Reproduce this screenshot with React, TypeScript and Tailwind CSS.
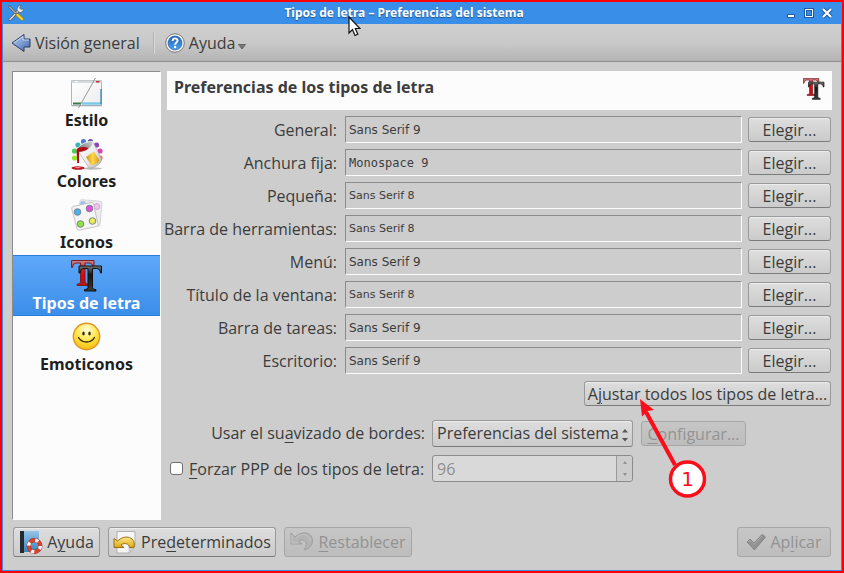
import type { ReactNode } from "react";

const buttonBase =
  "flex items-center justify-center whitespace-nowrap rounded-[3px] border leading-[22px]";
const buttonOn =
  "border-[#9a9a9a] border-b-[#7c7c7c] bg-linear-to-b from-[#dedede] to-[#cbcbcb] text-[#3c3c3c] shadow-[inset_0_1px_0_#ececec]";
const buttonOff = "border-[#a6a6a6] bg-linear-to-b from-[#c6c6c6] to-[#bdbdbd] text-[#939393]";

function Button({
  children,
  className = "",
  disabled = false,
}: {
  children: ReactNode;
  className?: string;
  disabled?: boolean;
}) {
  return (
    <button
      type="button"
      disabled={disabled}
      className={`${buttonBase} ${disabled ? buttonOff : buttonOn} ${className}`}
    >
      {children}
    </button>
  );
}

function Key({ children }: { children: string }) {
  return <span className="underline decoration-1 underline-offset-3">{children}</span>;
}

function ToolsIcon() {
  return (
    <svg width="16" height="16" viewBox="0 0 16 16" aria-hidden="true">
      <path d="M2 14.500 11 5" stroke="#555" strokeWidth="2.800" strokeLinecap="round" />
      <path d="M2 14.500 11 5" stroke="#e0e0e0" strokeWidth="1.500" strokeLinecap="round" />
      <path d="M9 4 10.500 1 13 .5 11.500 3 13 4.500 15.500 3.500 15 6 12.500 7.500 10 6.500Z" fill="#ededed" stroke="#555" strokeWidth=".6" />
      <path d="M1 1.500 8 8.500" stroke="#555" strokeWidth="2.200" strokeLinecap="round" />
      <path d="M1 1.500 8 8.500" stroke="#eee" strokeWidth="1" />
      <path d="m9.500 10 4.500 4" stroke="#b88700" strokeWidth="3.200" strokeLinecap="round" />
      <path d="m9.500 10 4.500 4" stroke="#ffd52a" strokeWidth="2" strokeLinecap="round" />
    </svg>
  );
}

function BackIcon() {
  return (
    <svg width="20" height="20" viewBox="0 0 20 20" aria-hidden="true">
      <defs>
        <linearGradient id="back" x1="0" y1="0" x2="1" y2="1">
          <stop offset="0" stopColor="#b9cdea" />
          <stop offset=".5" stopColor="#7f9fd3" />
          <stop offset="1" stopColor="#3f65a8" />
        </linearGradient>
      </defs>
      <path d="M1 10 13 1.500V6h6v8h-6v4.500Z" fill="url(#back)" stroke="#2a3f68" strokeLinejoin="round" />
      <path d="M3 9.800 12 3.400V7h6" fill="none" stroke="#d4e1f5" strokeWidth=".8" />
    </svg>
  );
}

function HelpIcon() {
  return (
    <svg width="20" height="20" viewBox="0 0 20 20" aria-hidden="true">
      <defs>
        <linearGradient id="help" x1="0" y1="0" x2="0" y2="1">
          <stop offset="0" stopColor="#1b5eb8" />
          <stop offset="1" stopColor="#4fa5ee" />
        </linearGradient>
      </defs>
      <circle cx="10" cy="10" r="9.300" fill="#f4f4f4" stroke="#777" />
      <circle cx="10" cy="10" r="7" fill="url(#help)" stroke="#1c559e" strokeWidth=".6" />
      <path d="M7.600 8c0-3.600 5-3.300 5-.4 0 1.900-2.500 1.900-2.500 4.100" fill="none" stroke="#fff" strokeWidth="1.900" />
      <circle cx="10.100" cy="14" r="1.200" fill="#fff" />
    </svg>
  );
}

function StyleIcon() {
  return (
    <svg width="32" height="32" viewBox="0 0 32 32" aria-hidden="true">
      <defs>
        <linearGradient id="pane" x1="0" y1="0" x2="1" y2="1">
          <stop offset="0" stopColor="#fff" />
          <stop offset="1" stopColor="#ececec" />
        </linearGradient>
        <linearGradient id="bar" x1="0" y1="0" x2="1" y2="0">
          <stop offset="0" stopColor="#3f9bd0" />
          <stop offset="1" stopColor="#9fe0fa" />
        </linearGradient>
      </defs>
      <path d="M.5 3.500h30v25H.5z" fill="url(#pane)" stroke="#b4b4b4" />
      <path d="M.5 3.500h30v2.500H.5z" fill="#d4dadd" />
      <path d="M25 4h3.500v1.500H25z" fill="#d03030" />
      <path d="M4 4.500h3" stroke="#fff" />
      <path d="M2 26.500H10" stroke="#3c7a45" strokeWidth="2" />
      <path d="M11 26.500h19" stroke="url(#bar)" strokeWidth="3" />
      <path d="M11 26.500h19" stroke="#7cc8ea" strokeWidth="2.400" />
      <path d="M30 12v15" stroke="#2b7fb5" strokeWidth="1.200" />
      <path d="M1 28.800h30" stroke="#a3adb0" />
      <path d="M24.500 1 7.500 31" stroke="#8b8b8b" strokeWidth=".9" />
    </svg>
  );
}

function ColorsIcon() {
  const dots = [
    [3.5, 20, "#96ea25"],
    [3.5, 13, "#41d556"],
    [7, 7, "#35b6b6"],
    [12.5, 3.5, "#4b77d6"],
    [19.5, 3.5, "#5a4fb8"],
    [25.5, 7, "#8e43b7"],
    [29, 13, "#dd43b4"],
    [29, 20, "#f05b62"],
  ] as const;
  return (
    <svg width="32" height="32" viewBox="0 0 32 32" aria-hidden="true">
      <defs>
        <linearGradient id="bucket" x1="0" y1="0" x2="1" y2="1">
          <stop offset="0" stopColor="#fff" />
          <stop offset=".6" stopColor="#e8e8e8" />
          <stop offset="1" stopColor="#a8a8a8" />
        </linearGradient>
        <linearGradient id="rim" x1="0" y1="1" x2="1" y2="0">
          <stop offset="0" stopColor="#555" />
          <stop offset="1" stopColor="#d8d8d8" />
        </linearGradient>
        <linearGradient id="gold" x1="0" y1="0" x2="1" y2="0">
          <stop offset="0" stopColor="#d18e00" />
          <stop offset=".5" stopColor="#ffd750" />
          <stop offset="1" stopColor="#d89a10" />
        </linearGradient>
      </defs>
      {dots.map(([x, y, fill]) => (
        <circle key={fill} cx={x} cy={y} r="2.600" fill={fill} />
      ))}
      <ellipse cx="21" cy="30.500" rx="10" ry="1.200" fill="#bbb" />
      <path d="M7 13 22 4 30.500 21c1 4-8 10-12.500 9Z" fill="url(#bucket)" stroke="#a0a0a0" strokeWidth=".6" />
      <path d="m15 19 8-5.500 5.500 9c-2 3-5 4-8 5Z" fill="url(#gold)" />
      <path d="M5.500 12C8 7 16 2.500 22 3.500c1 2-3 8-9 10-4 1-7 .5-7.500-1.500Z" fill="url(#rim)" stroke="#f4f4f4" strokeWidth=".8" />
      <path d="M5.500 11.500c3-3 8-3 12-1.500-2 2.500-6 3.800-9.500 3.800V25H6.200Z" fill="#b50b12" />
      <ellipse cx="7" cy="30" rx="6.500" ry="1.800" fill="#bf1a20" />
      <ellipse cx="7" cy="29.600" rx="3" ry=".6" fill="#ee9797" />
    </svg>
  );
}

function IconsIcon() {
  const dots = [
    [6.5, 13, "#46b4f2"],
    [18.5, 9.5, "#e64be0"],
    [9.5, 25, "#8de343"],
    [21.5, 22, "#ecec5b"],
  ] as const;
  return (
    <svg width="32" height="32" viewBox="0 0 32 32" aria-hidden="true">
      <rect x="8" y="1.500" width="22" height="25" rx="2" transform="rotate(5 19 14)" fill="#ececec" stroke="#d4d4d4" />
      <circle cx="12" cy="5" r="3" fill="#9fc0ef" />
      <circle cx="26" cy="7.500" r="2.900" fill="#efc2ec" stroke="#d5a5d5" />
      <path d="M2 7.500 20 3.500Q22 3 22.500 5l4.500 20q.4 2-1.500 2.500L8.500 31q-2 .5-2.500-1.500L.8 10Q.5 8 2 7.500Z" fill="#f5f5f5" stroke="#c4c4c4" />
      {dots.map(([x, y, fill]) => (
        <circle key={fill} cx={x} cy={y} r="3.300" fill={fill} stroke="#7b848c" strokeWidth="1" />
      ))}
    </svg>
  );
}

const serifT =
  "M0 0H22.500V7H21.500Q21 2.500 17.500 2.500H13.500V21.500Q13.500 23.500 17 23.700V25H5.500V23.700Q9 23.500 9 21.500V2.500H5Q1.500 2.500 1 7H0Z";

function FontsIcon({ size }: { size: number }) {
  return (
    <svg width={size} height={size} viewBox="0 0 32 32" aria-hidden="true">
      <defs>
        <linearGradient id="redT" x1="0" y1="0" x2="0" y2="1">
          <stop offset="0" stopColor="#c98a90" />
          <stop offset=".3" stopColor="#c9242b" />
          <stop offset=".6" stopColor="#e80008" />
          <stop offset="1" stopColor="#b3161c" />
        </linearGradient>
        <linearGradient id="blackT" x1="0" y1="0" x2="0" y2="1">
          <stop offset="0" stopColor="#777" />
          <stop offset=".35" stopColor="#151515" />
          <stop offset="1" stopColor="#3c3c3c" />
        </linearGradient>
      </defs>
      <path d={serifT} transform="translate(.5 .5)" fill="url(#redT)" stroke="#762026" />
      <path d={serifT} transform="translate(8 6)" fill="url(#blackT)" stroke="#111" />
    </svg>
  );
}

function SmileIcon() {
  return (
    <svg width="32" height="32" viewBox="0 0 32 32" aria-hidden="true">
      <defs>
        <radialGradient id="smile" cx=".5" cy=".25" r=".8">
          <stop offset="0" stopColor="#fffce0" />
          <stop offset=".45" stopColor="#ffe955" />
          <stop offset="1" stopColor="#f6b800" />
        </radialGradient>
      </defs>
      <circle cx="15.500" cy="15.500" r="13.200" fill="url(#smile)" stroke="#e0962c" strokeWidth="1.400" />
      <ellipse cx="12.500" cy="12.500" rx="1.200" ry="2" fill="#33290c" />
      <ellipse cx="18.500" cy="12.500" rx="1.200" ry="2" fill="#33290c" />
      <path d="M7.500 16.500c3.500 6 12.500 6 16 0" fill="none" stroke="#33290c" strokeWidth="1.400" strokeLinecap="round" />
    </svg>
  );
}

function HandbookIcon() {
  return (
    <svg width="24" height="24" viewBox="0 0 24 24" aria-hidden="true">
      <defs>
        <linearGradient id="book" x1="0" y1="0" x2="0" y2="1">
          <stop offset="0" stopColor="#93c4e8" />
          <stop offset="1" stopColor="#3c83bd" />
        </linearGradient>
      </defs>
      <path d="M1 1h4v22H1z" fill="#25292d" />
      <path d="M5 1h15v21H5z" fill="url(#book)" />
      <circle cx="15.500" cy="16" r="5.800" fill="none" stroke="#8d2c20" strokeWidth="4.200" />
      <circle cx="15.500" cy="16" r="5.800" fill="none" stroke="#d9432f" strokeWidth="3.400" />
      <circle cx="15.500" cy="16" r="5.800" fill="none" stroke="#f5f5f5" strokeWidth="3.400" strokeDasharray="3.200 5.910" />
    </svg>
  );
}

function DefaultsIcon() {
  return (
    <svg width="24" height="24" viewBox="0 0 24 24" aria-hidden="true">
      <defs>
        <linearGradient id="undo" x1="0" y1="0" x2="0" y2="1">
          <stop offset="0" stopColor="#ffe98a" />
          <stop offset="1" stopColor="#dba514" />
        </linearGradient>
      </defs>
      <path d="M4 1.500h18V16l-6 7H4Z" fill="#f6f6f6" stroke="#b0b0b0" />
      <path d="m22 16-6 7v-6Z" fill="#d2d2d2" stroke="#aaa" strokeWidth=".5" />
      <path d="M1 8.500v9h10l-3-2.500c4-3 8-1 8.500 2.500H21c2.500-10-8.500-14-16.500-6.500Z" fill="url(#undo)" stroke="#96700f" strokeLinejoin="round" />
    </svg>
  );
}

function ResetIcon() {
  return (
    <svg width="24" height="24" viewBox="0 0 24 24" aria-hidden="true">
      <path d="M1 3v11h11l-3-3c6-3 10 2 5 9 13-3 10-19-1-17-3 .5-6 2-8 4Z" fill="#b3b3b3" stroke="#a0a0a0" strokeLinejoin="round" />
      <path d="M2 5v8h6M6 8c5-5 13-5 14 3" fill="none" stroke="#c4c4c4" />
    </svg>
  );
}

function ApplyIcon() {
  return (
    <svg width="20" height="20" viewBox="0 0 20 20" aria-hidden="true">
      <path d="m1 10 3-3 4 4L16 2.500l3.500 2.500L8.500 18Z" fill="#929292" stroke="#868686" strokeLinejoin="round" />
      <path d="m2 10 2-1.600 4 4 8-8.500" fill="none" stroke="#aaa" />
    </svg>
  );
}

function PointerIcon() {
  return (
    <svg
      className="pointer-events-none absolute left-[64px] top-[15px]"
      width="13"
      height="21"
      viewBox="0 0 13 21"
      aria-hidden="true"
    >
      <path d="M1 1v16l3.500-3.500L7 19.500l2.800-1.300L7.300 12.500H12Z" fill="#fff" stroke="#111" strokeWidth="1.200" />
    </svg>
  );
}

const sections = [
  { name: "Estilo", icon: <StyleIcon /> },
  { name: "Colores", icon: <ColorsIcon /> },
  { name: "Iconos", icon: <IconsIcon /> },
  { name: "Tipos de letra", icon: <FontsIcon size={32} />, selected: true },
  { name: "Emoticonos", icon: <SmileIcon /> },
];

const sans9 = "font-['DejaVu_Sans',sans-serif] text-[12px]";
const sans8 = "font-['DejaVu_Sans',sans-serif] text-[11px]";
const mono9 = "font-['DejaVu_Sans_Mono',monospace] text-[12px]";

const fonts = [
  { id: "general", label: "General:", value: "Sans Serif 9", face: sans9 },
  { id: "fixed", label: "Anchura fija:", value: "Monospace 9", face: mono9 },
  { id: "small", label: "Pequeña:", value: "Sans Serif 8", face: sans8 },
  { id: "toolbar", label: "Barra de herramientas:", value: "Sans Serif 8", face: sans8 },
  { id: "menu", label: "Menú:", value: "Sans Serif 9", face: sans9 },
  { id: "title", label: "Título de la ventana:", value: "Sans Serif 8", face: sans8 },
  { id: "taskbar", label: "Barra de tareas:", value: "Sans Serif 9", face: sans9 },
  { id: "desktop", label: "Escritorio:", value: "Sans Serif 9", face: sans9 },
];

function TitleBar() {
  return (
    <header className="flex h-[22px] items-center bg-[#398ee7] px-[5px]">
      <ToolsIcon />
      <div className="flex flex-1 justify-center">
        <h1 className="relative font-['Noto_Sans',sans-serif] text-[12px] leading-6 font-bold text-white [text-shadow:0_1px_1px_#22558b]">
          Tipos de letra – Preferencias del sistema
          <PointerIcon />
        </h1>
      </div>
      <div className="flex justify-end gap-1 pr-[2px]">
        <button type="button" aria-label="Minimizar">
          <svg width="14" height="14" viewBox="0 0 14 14">
            <path d="M3.500 8.500h7v3h-7z" fill="#fff" stroke="#1d5aa0" />
          </svg>
        </button>
        <button type="button" aria-label="Maximizar">
          <svg width="14" height="14" viewBox="0 0 14 14">
            <path d="M3.500 3.500h7v7h-7z" fill="none" stroke="#1d5aa0" strokeWidth="3" />
            <path d="M3.500 3.500h7v7h-7z" fill="none" stroke="#fff" />
          </svg>
        </button>
        <button type="button" aria-label="Cerrar">
          <svg width="14" height="14" viewBox="0 0 14 14">
            <path d="m3 3 8 8m0-8-8 8" stroke="#1d5aa0" strokeWidth="4" />
            <path d="m3 3 8 8m0-8-8 8" stroke="#fff" strokeWidth="2.200" />
          </svg>
        </button>
      </div>
    </header>
  );
}

function Toolbar() {
  return (
    <nav className="flex h-[38px] items-center border-b border-[#8f8f8f] bg-linear-to-b from-[#cfcfcf] via-[#c9c9c9] to-[#b4b4b4] px-2">
      <button type="button" className="flex items-center gap-1 leading-[22px]">
        <BackIcon />
        Visión general
      </button>
      <div className="mx-[10px] ml-[13px] h-[22px] border-l border-[#b2b2b2] bg-[#dadada] pl-px" />
      <button type="button" className="flex items-center gap-1 leading-[22px]">
        <HelpIcon />
        <span>Ayuda</span>
        <svg className="-ml-px mt-2" width="8" height="6" viewBox="0 0 8 6" aria-hidden="true">
          <path d="M.5.500h7L4 5Z" fill="#777" stroke="#666" />
        </svg>
      </button>
    </nav>
  );
}

function Sidebar() {
  return (
    <ul className="w-[149px] shrink-0 border border-[#fcfcfc] border-t-[#8b8b8b] border-l-[#8b8b8b] bg-[#fcfcfc]">
      {sections.map((s) => (
        <li key={s.name}>
          <button
            type="button"
            className={`flex h-[61px] w-full flex-col items-center border-y pt-1 font-['Noto_Sans',sans-serif] font-bold ${
              s.selected
                ? "border-[#2b7fd8] bg-linear-to-b from-[#5ea8fa] to-[#3b8ee9] text-white"
                : "border-transparent text-[#1f1f1f]"
            }`}
          >
            {s.icon}
            <span className="leading-[22px]">{s.name}</span>
          </button>
        </li>
      ))}
    </ul>
  );
}

function Callout() {
  return (
    <svg
      className="pointer-events-none absolute -top-[22px] left-0"
      width="70"
      height="100"
      viewBox="0 0 70 100"
      role="img"
      aria-label="1"
    >
      <path d="M6 13 35 66" stroke="#fb0d1b" strokeWidth="4" />
      <path d="M0 0 14 11 7.500 12 2 17.500Z" fill="#fb0d1b" />
      <circle cx="47.500" cy="80" r="17" fill="#fff" stroke="#fb0d1b" strokeWidth="3.500" />
      <text x="47.500" y="87" textAnchor="middle" fill="#fb0d1b" className="font-['DejaVu_Sans',sans-serif] text-[20px]">
        1
      </text>
    </svg>
  );
}

function Smoothing() {
  return (
    <div className="mt-[14px] grid grid-cols-[258px_201px_1fr] items-center gap-x-[7px] gap-y-2">
      <label htmlFor="smoothing" className="text-right leading-[27px]">
        Usar el su<Key>a</Key>vizado de bordes:
      </label>
      <div className="relative flex">
        <select
          id="smoothing"
          className={`h-[27px] w-full appearance-none rounded-[3px] border pl-1 leading-[25px] ${buttonOn}`}
        >
          <option>Preferencias del sistema</option>
        </select>
        <svg className="pointer-events-none absolute top-2 right-[5px]" width="6" height="14" viewBox="0 0 6 14" aria-hidden="true">
          <path d="M0 4.500 3 1l3 3.500ZM0 10h6L3 13.500Z" fill="#555" />
        </svg>
      </div>
      <div className="relative flex pl-px">
        <Button disabled className="h-[25px] w-[105px]">
          <span>
            <Key>C</Key>onfigurar...
          </span>
        </Button>
        <Callout />
      </div>
      <div className="flex items-center gap-[6px] pl-[3px]">
        <input
          id="force-dpi"
          type="checkbox"
          className="size-[13px] shrink-0 appearance-none rounded-[3px] border border-[#6f6f6f] bg-[#fcfcfc]"
        />
        <label htmlFor="force-dpi" className="leading-[22px] whitespace-nowrap">
          <Key>F</Key>orzar PPP de los tipos de letra:
        </label>
      </div>
      <div className="flex h-[27px] rounded-[3px] border border-[#8c8c8c] bg-[#d9d9d9]">
        <input
          type="text"
          disabled
          defaultValue="96"
          aria-label="PPP de los tipos de letra"
          className="min-w-0 flex-1 pl-1 text-[#8f8f8f]"
        />
        <div className="flex w-4 flex-col items-center justify-around rounded-r-[3px] border-l border-[#9b9b9b] bg-[#cccccc]">
          <button type="button" disabled aria-label="Aumentar" className="flex">
            <svg width="4" height="3" viewBox="0 0 4 3">
              <path d="M0 3 2 0l2 3Z" fill="#909090" />
            </svg>
          </button>
          <button type="button" disabled aria-label="Reducir" className="flex">
            <svg width="4" height="3" viewBox="0 0 4 3">
              <path d="M0 0h4L2 3Z" fill="#909090" />
            </svg>
          </button>
        </div>
      </div>
    </div>
  );
}

function FontPanel() {
  return (
    <main className="min-w-0 flex-1">
      <div className="flex h-[39px] items-center justify-between bg-[#fcfcfc] pr-[7px] pb-[3px] pl-[7px]">
        <h2 className="pb-1 font-['Noto_Sans',sans-serif] font-bold">Preferencias de los tipos de letra</h2>
        <FontsIcon size={22} />
      </div>
      <div className="mt-[6px] grid grid-cols-[170px_1fr_83px] items-center gap-y-[6px] pr-px">
        {fonts.map((f) => (
          <div key={f.id} className="contents">
            <label htmlFor={f.id} className="flex justify-end leading-[22px] whitespace-nowrap">
              {f.label}
            </label>
            <input
              id={f.id}
              readOnly
              defaultValue={f.value}
              className={`mr-[6px] ml-2 h-[27px] min-w-0 border border-[#fcfcfc] border-t-[#8b8b8b] border-l-[#8b8b8b] px-[3px] ${f.face}`}
            />
            <Button className="h-[25px]">Elegir...</Button>
          </div>
        ))}
      </div>
      <div className="mt-[7px] flex justify-end pr-px">
        <Button className="h-[25px] w-[247px]">
          <span>
            A<Key>j</Key>ustar todos los tipos de letra...
          </span>
        </Button>
      </div>
      <Smoothing />
    </main>
  );
}

function Footer() {
  return (
    <footer className="mt-[7px] flex gap-2 pr-px pl-px">
      <Button className="h-[30px] w-[87px] gap-1">
        <HandbookIcon />
        <span>
          A<Key>y</Key>uda
        </span>
      </Button>
      <Button className="h-[30px] w-[168px] gap-1">
        <DefaultsIcon />
        <span>
          Pre<Key>d</Key>eterminados
        </span>
      </Button>
      <Button disabled className="h-[30px] w-[128px] gap-1">
        <ResetIcon />
        <span>
          <Key>R</Key>establecer
        </span>
      </Button>
      <Button disabled className="ml-auto h-[30px] w-[94px] gap-1">
        <ApplyIcon />
        <span>
          Ap<Key>l</Key>icar
        </span>
      </Button>
    </footer>
  );
}

export default function App() {
  return (
    <div className="flex min-h-screen border-2 border-[#fb0007] bg-[#398ee7] font-['Open_Sans',sans-serif] text-[16px] leading-6 text-[#3c3c3c]">
      <div className="flex flex-1 flex-col rounded-t-[4px] border-x border-b border-[#398ee7] bg-[#cdcdcd]">
        <TitleBar />
        <Toolbar />
        <div className="flex flex-1 flex-col px-[9px] pt-[9px] pb-[13px]">
          <div className="flex flex-1 gap-[6px]">
            <Sidebar />
            <FontPanel />
          </div>
          <Footer />
        </div>
      </div>
    </div>
  );
}
